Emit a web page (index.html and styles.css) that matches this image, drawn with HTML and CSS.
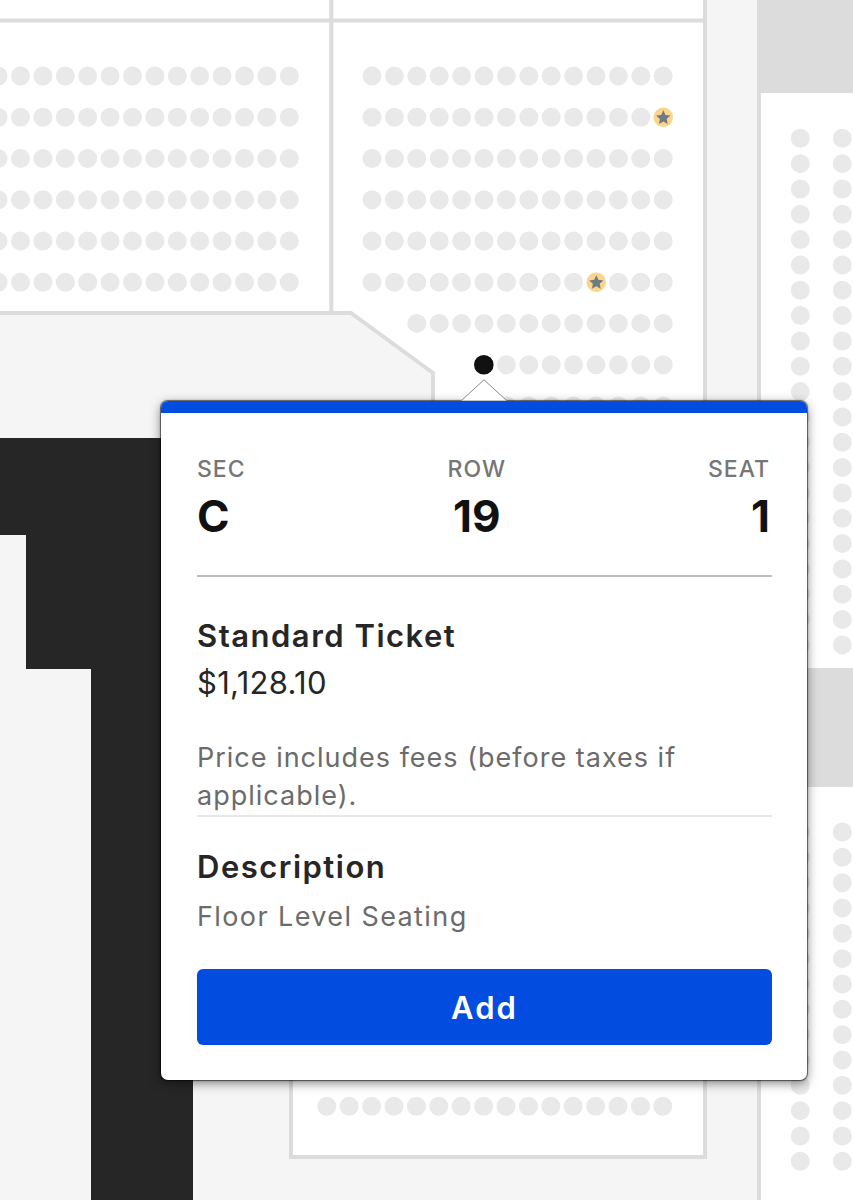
FILE: index.html
```html
<!DOCTYPE html>
<html lang="en">
<head>
<meta charset="utf-8">
<title>Seat map</title>
<link rel="stylesheet" href="styles.css">
</head>
<body>
<main class="stage">
  <svg class="map" width="853" height="1200" viewBox="0 0 853 1200" aria-hidden="true">
    <rect class="aisle" x="705" y="0" width="54" height="1200"/>
    <rect class="block" x="757" y="0" width="96" height="93"/>
    <rect class="block" x="757" y="668" width="96" height="119"/>
    <path class="floor" d="M0 313H351L433 373V1000H291V1157H705V1200H0Z"/>
    <path class="dark" d="M0 438H193V1200H91V669H26V535H0Z"/>
    <path class="wall" d="M0 20.5H705M331.300 0V313M0 313H351L433 373V420M705 0V1157H291V1000M759 93V1200"/>
    <path class="seats-h" d="M-1.900 76h291.300M-1.900 117.300h291.300M-1.900 158.500h291.300M-1.900 199.800h291.300M-1.900 241h291.300M-1.900 282.200h291.300M372 76h291.300M372 117.300h291.300M372 158.500h291.300M372 199.800h291.300M372 241h291.300M372 282.200h291.300M416.800 323.400h246.500M506.400 364.700h156.900M506.400 406h156.900M326.800 1106.300h336.500"/>
    <path class="seats-v" d="M800.300 138.300v507M842.300 138.300v507M800.300 832v330M842.300 832v330"/>
    <g class="seat-star">
      <circle cx="663.300" cy="117.300" r="9.700"/>
      <circle cx="596.300" cy="282.200" r="9.700"/>
    </g>
    <g class="star">
      <path d="M663.300 110.300l2.100 4.600 5 .6-3.700 3.400 1 5-4.400-2.500-4.400 2.500 1-5-3.700-3.400 5-.6z"/>
      <path d="M596.300 275.200l2.100 4.600 5 .6-3.700 3.400 1 5-4.400-2.500-4.400 2.500 1-5-3.700-3.400 5-.6z"/>
    </g>
    <circle class="seat-picked" cx="483.800" cy="364.700" r="9.800"/>
  </svg>

  <section class="card">
    <svg class="pointer" width="48" height="23" viewBox="0 0 48 23" aria-hidden="true">
      <path d="M1 22L24 .8 47 22Z"/>
    </svg>
    <div class="card-bar"></div>
    <div class="card-body">
      <div class="place">
        <div class="place-col"><span class="place-label">SEC</span><strong class="place-value">C</strong></div>
        <div class="place-col place-mid"><span class="place-label">ROW</span><strong class="place-value">19</strong></div>
        <div class="place-col place-end"><span class="place-label">SEAT</span><strong class="place-value">1</strong></div>
      </div>
      <div class="offer">
        <h2 class="title">Standard Ticket</h2>
        <p class="price">$1,128.10</p>
        <p class="note">Price includes fees (before taxes if applicable).</p>
      </div>
      <div class="about">
        <h2 class="title">Description</h2>
        <p class="desc">Floor Level Seating</p>
      </div>
      <button class="add" type="button">Add</button>
    </div>
  </section>
</main>
</body>
</html>
```

FILE: styles.css
```css
* { box-sizing: border-box; }
html, body { margin: 0; padding: 0; background: #fff; }
body { font-family: "Inter", "Lato", sans-serif; }

.stage { position: relative; width: 853px; height: 1200px; overflow: hidden; }
.map { position: absolute; left: 0; top: 0; display: block; }

.aisle, .floor { fill: #f5f5f5; }
.block { fill: #dcdcdc; }
.dark { fill: #262626; }
.wall { fill: none; stroke: #dcdcdc; stroke-width: 4; }
.seats-h, .seats-v { fill: none; stroke: #e9e9e9; stroke-width: 19; stroke-linecap: round; }
.seats-h { stroke-dasharray: 0 22.4; }
.seats-v { stroke-dasharray: 0 25.33; }
.seat-star { fill: #fbd58a; }
.star { fill: #6f7a86; }
.seat-picked { fill: #111; }

.card {
  position: absolute;
  left: 161px;
  top: 401px;
  width: 646px;
  height: 679px;
  background: #fff;
  border-radius: 7px;
  box-shadow: 0 0 1px 0.5px rgba(0, 0, 0, .55), 0 3px 11px rgba(0, 0, 0, .5);
}
.pointer { position: absolute; left: 299px; top: -22px; display: block; }
.pointer path { fill: #fff; stroke: #8a8a8a; stroke-width: 1; }
.card-bar { position: relative; height: 12px; background: #024ddf; border-radius: 7px 7px 0 0; }
.card-body { padding: 0 35px 0 36px; }

.place { display: flex; justify-content: space-between; padding: 41px 2px 34px 0; border-bottom: 2px solid #bdbdbd; }
.place-col { display: flex; flex-direction: column; align-items: flex-start; }
.place-mid { align-items: center; }
.place-end { align-items: flex-end; }
.place-label { font-size: 23px; line-height: 30px; font-weight: 500; color: #767676; letter-spacing: 1px; }
.place-value { font-size: 44px; line-height: 50px; font-weight: 700; color: #111; margin-top: 7px; }

.offer { padding-top: 39px; border-bottom: 2px solid #e8e8e8; }
.title { margin: 0; font-size: 31px; line-height: 40px; font-weight: 600; color: #262626; letter-spacing: 1.5px; }
.price { margin: 7px 0 0; font-size: 31px; line-height: 40px; color: #262626; letter-spacing: .3px; }
.note { margin: 36px 0 0; font-size: 27px; line-height: 38px; color: #6b6b6b; letter-spacing: 1px; }

.about { padding-top: 30px; }
.desc { margin: 10px 0 0; font-size: 27px; line-height: 39px; color: #6b6b6b; letter-spacing: 1.4px; }

.add {
  display: block;
  width: 100%;
  height: 76px;
  margin-top: 33px;
  border: 0;
  border-radius: 6px;
  background: #024ddf;
  color: #fff;
  font-family: inherit;
  font-size: 31px;
  font-weight: 600;
  letter-spacing: 2px;
}
```
